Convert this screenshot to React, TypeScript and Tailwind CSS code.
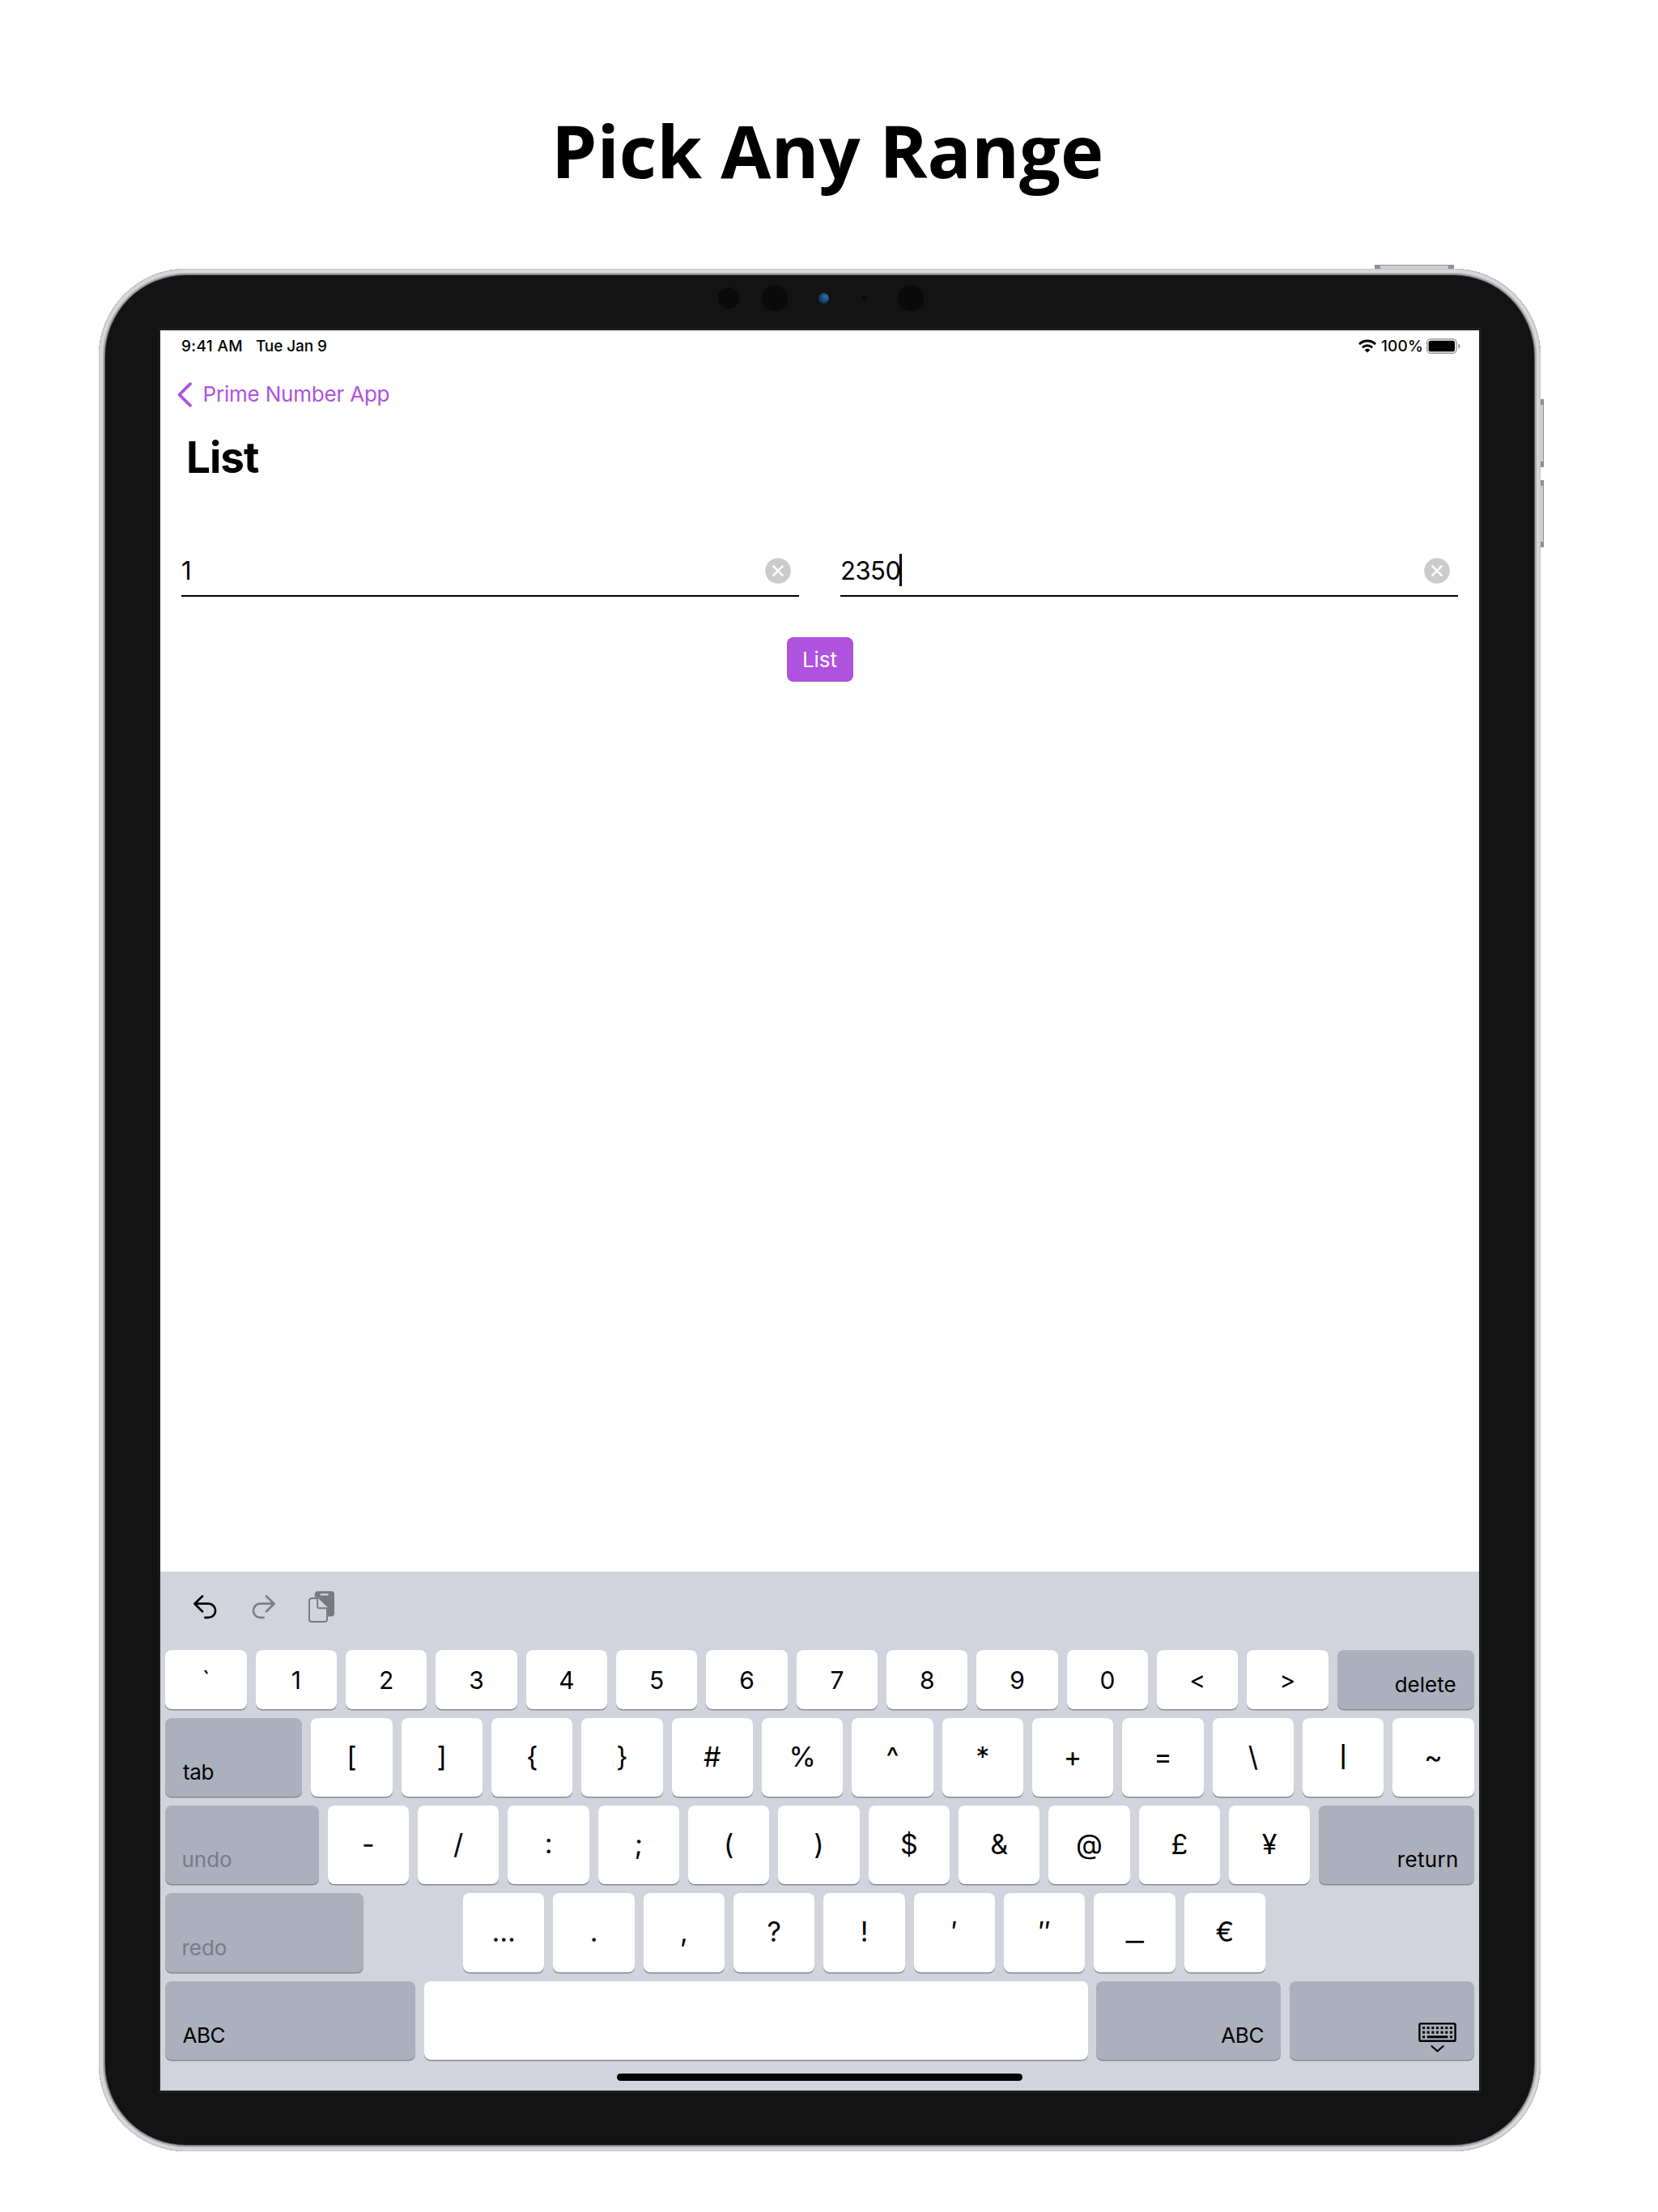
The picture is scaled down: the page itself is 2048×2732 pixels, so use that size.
import React from "react";
import clsx from "clsx";

/* ---------- icons ---------- */

function WifiIcon() {
  return (
    <svg width="22" height="17" viewBox="0 0 22 17" fill="none" stroke="#000" strokeWidth="2.9">
      <path d="M1 6.1a14.4 14.4 0 0 1 20 0" />
      <path d="M4.9 10.2a8.9 8.9 0 0 1 12.2 0" />
      <path d="M11 16.6 7.6 13.2a5 5 0 0 1 6.8 0z" fill="#000" stroke="none" />
    </svg>
  );
}

function BatteryIcon() {
  return (
    <svg width="42" height="19" viewBox="0 0 42 19">
      <rect x="0.7" y="0.7" width="36.3" height="17.6" rx="4.6" fill="none" stroke="#9a9a9a" strokeWidth="1.4" />
      <rect x="2.6" y="2.7" width="32.4" height="13.6" rx="2.6" fill="#000" />
      <path d="M39.2 6.4c1.6.5 2.4 1.7 2.4 3.1s-.8 2.6-2.4 3.1z" fill="#9a9a9a" />
    </svg>
  );
}

function BackIcon() {
  return (
    <svg width="22" height="34" viewBox="0 0 22 34" fill="none" stroke="#af52de" strokeWidth="3.8" strokeLinecap="round" strokeLinejoin="round">
      <path d="M17 4.2 3.5 17.5 17 30.8" />
    </svg>
  );
}

function ClearIcon() {
  return (
    <svg width="32" height="32" viewBox="0 0 32 32">
      <circle cx="16" cy="16" r="15.8" fill="#cbcbcb" />
      <path d="m10.4 10.4 11.2 11.2M21.6 10.4 10.4 21.6" stroke="#fff" strokeWidth="2.6" strokeLinecap="round" />
    </svg>
  );
}

function UndoIcon({ flipped = false }: { flipped?: boolean }) {
  return (
    <svg
      width="32"
      height="32"
      viewBox="0 0 32 32"
      fill="none"
      strokeWidth="2.7"
      strokeLinecap="round"
      strokeLinejoin="round"
      className={flipped ? "-scale-x-100 stroke-[#7d7f84]" : "stroke-black"}
    >
      <path d="M12 2.5 2.4 11.7 12 21.2M2.8 11.7H19.5a8.6 8.6 0 0 1 0 17.2H15.4" />
    </svg>
  );
}

function PasteIcon() {
  return (
    <svg width="35" height="42" viewBox="0 0 35 42">
      <rect x="8.8" y="1.2" width="24.2" height="31.4" rx="4" fill="#77797e" />
      <rect x="15.6" y="4.2" width="10" height="2.4" rx="0.6" fill="#d1d4dc" />
      <path d="M1 12.4a3.6 3.6 0 0 1 3.6-3.6H11.8L25 21.6V36.6a3.6 3.6 0 0 1-3.6 3.6H4.6A3.6 3.6 0 0 1 1 36.6z" fill="#d1d4dc" />
      <path
        d="M12.2 10H5A3 3 0 0 0 2 13V36a3 3 0 0 0 3 3H21a3 3 0 0 0 3-3V22.2H14.2a2 2 0 0 1-2-2V10"
        fill="none"
        stroke="#77797e"
        strokeWidth="1.9"
        strokeLinejoin="round"
      />
    </svg>
  );
}

function HideKeyboardIcon() {
  const cols = [0, 1, 2, 3, 4, 5, 6];
  return (
    <svg width="47" height="37" viewBox="0 0 47 37">
      <rect x="1.4" y="1.4" width="44.2" height="21.4" rx="1.6" fill="none" stroke="#000" strokeWidth="2.4" />
      {[5, 10.6].map((y) => cols.map((c) => <rect key={`${y}-${c}`} x={5 + c * 5.65} y={y} width="3.1" height="3.1" />))}
      <rect x="5" y="16.2" width="3.1" height="3.1" />
      <rect x="10.7" y="16.2" width="25.7" height="3.1" />
      <rect x="38.9" y="16.2" width="3.1" height="3.1" />
      <path d="m16.6 29.2 7 6.2 7-6.2" fill="none" stroke="#000" strokeWidth="2.1" strokeLinecap="round" strokeLinejoin="round" />
    </svg>
  );
}

/* ---------- keyboard ---------- */

const keyBase = "flex rounded-[8px] shadow-[0_1.5px_0_#898a8e]";

// Optical adjustments for glyphs that sit off the usual size or baseline.
const glyphTweaks: Record<string, string> = {
  "|": "text-[26px] font-semibold",
  _: "scale-x-[1.45] -translate-y-[1px]",
  ":": "-translate-y-[1px]",
};

function CharKey({ char, short = false }: { char: string; short?: boolean }) {
  return (
    <div
      className={clsx(
        keyBase,
        "w-[100.4px] shrink-0 justify-center bg-white",
        short ? "h-[73px] text-[30px] leading-[75px]" : "h-[97.2px] text-[34px] leading-[96px]",
      )}
    >
      <span className={glyphTweaks[char]}>{char}</span>
    </div>
  );
}

function ActionKey({ className, children }: { className: string; children: React.ReactNode }) {
  return (
    <div className={clsx(keyBase, "items-end bg-[#abb0bc] pb-[15px] text-[26px] leading-[30px]", className)}>
      <span>{children}</span>
    </div>
  );
}

function Row({ children }: { children: React.ReactNode }) {
  return <div className="flex gap-[10.95px]">{children}</div>;
}

const row1 = ["`", "1", "2", "3", "4", "5", "6", "7", "8", "9", "0", "<", ">"];
const row2 = ["[", "]", "{", "}", "#", "%", "^", "*", "+", "=", "\\", "|", "~"];
const row3 = ["-", "/", ":", ";", "(", ")", "$", "&", "@", "£", "¥"];
const row4 = ["…", ".", ",", "?", "!", "′", "″", "_", "€"];

function Keyboard() {
  return (
    <div className="mt-auto flex h-[641px] flex-col bg-[#d1d4dc]">
      <div className="mb-[9px] flex h-[88px] items-center gap-[39px] pl-10">
        <UndoIcon />
        <UndoIcon flipped />
        <PasteIcon />
      </div>
      <div className="flex flex-col gap-[11px] pr-[6.4px] pl-[6.4px]">
        <Row>
          {row1.map((c) => (
            <CharKey key={c} char={c} short />
          ))}
          <ActionKey className="h-[73px] flex-1 justify-end pr-[22px]">delete</ActionKey>
        </Row>
        <Row>
          <ActionKey className="h-[97.2px] flex-1 pl-[21.5px] tracking-[-0.3px]">tab</ActionKey>
          {row2.map((c) => (
            <CharKey key={c} char={c} />
          ))}
        </Row>
        <Row>
          <ActionKey className="h-[97.2px] w-[189.4px] pl-5 text-[#777c87]">undo</ActionKey>
          {row3.map((c) => (
            <CharKey key={c} char={c} />
          ))}
          <ActionKey className="h-[97.2px] flex-1 justify-end pr-[19px] tracking-[0.3px]">return</ActionKey>
        </Row>
        <Row>
          <ActionKey className="mr-[111.7px] h-[97.2px] w-[245px] pl-5 text-[#777c87]">redo</ActionKey>
          {row4.map((c) => (
            <CharKey key={c} char={c} />
          ))}
        </Row>
        <Row>
          <ActionKey className="h-[97.2px] w-[309px] pl-[21px] tracking-[-0.4px]">ABC</ActionKey>
          <div className={clsx(keyBase, "h-[97.2px] flex-1 bg-white")} />
          <ActionKey className="h-[97.2px] w-[227.6px] justify-end pr-[21px] tracking-[-0.4px]">ABC</ActionKey>
          <div className={clsx(keyBase, "h-[97.2px] w-[227.6px] items-end justify-end bg-[#abb0bc] pr-[22px] pb-[9px]")}>
            <HideKeyboardIcon />
          </div>
        </Row>
      </div>
      <div className="mx-auto mt-auto mb-3 h-[9px] w-[501px] rounded-full bg-black" />
    </div>
  );
}

/* ---------- app screen ---------- */

function Field({ value, focused = false }: { value: string; focused?: boolean }) {
  return (
    <div className="h-[53px] w-[763px] border-b-2 border-black pr-[10.5px]">
      <div className="flex h-10 items-center">
        <span className="pt-[2px] text-[31px] leading-10 tracking-[-0.5px]">{value}</span>
        {focused && <span className="-ml-px h-10 w-[3px] bg-black" />}
        <span className="mt-[2px] ml-auto">
          <ClearIcon />
        </span>
      </div>
    </div>
  );
}

function Screen() {
  return (
    <div className="flex h-[2174px] w-[1629px] flex-col bg-white font-['Inter',sans-serif] text-black shadow-[0_0_0_3px_#1b1e20]">
      <div className="flex h-[34px] items-center pt-[5px] pr-[23px] pl-[26px] text-[19px] leading-7 font-medium">
        <span className="pt-px tracking-[0.35px]">9:41 AM</span>
        <span className="ml-[16px] pt-px tracking-[-0.1px]">Tue Jan 9</span>
        <span className="ml-auto">
          <WifiIcon />
        </span>
        <span className="mr-1 ml-[6px] pt-px tracking-[0.2px]">100%</span>
        <BatteryIcon />
      </div>

      <div className="mt-[25px] flex h-10 items-center pl-5 text-[#af52de]">
        <BackIcon />
        <span className="ml-[10.5px] text-[26px] leading-10 tracking-[-0.2px]">Prime Number App</span>
      </div>

      <h2 className="mt-[26px] pl-8 text-[53px] leading-[64px] font-bold tracking-[-1px]">List</h2>

      <div className="mt-[87px] flex gap-[51px] pl-[26px]">
        <Field value="1" />
        <Field value="2350" focused />
      </div>

      <button className="mx-auto mt-[50px] h-[55px] w-[82px] rounded-[8px] bg-[#af52de] text-[26px] leading-[55px] text-white">List</button>

      <Keyboard />
    </div>
  );
}

/* ---------- device ---------- */

function Sensor({ className }: { className: string }) {
  return <div className={clsx("absolute rounded-full bg-[#0a0a0a]", className)} />;
}

function HardwareButton({ className }: { className: string }) {
  return <div className={clsx("absolute border border-[#8f9093] bg-[#cfcfd1]", className)} />;
}

export default function App() {
  return (
    <div className="flex h-[2732px] w-[2048px] flex-col overflow-hidden bg-white">
      <h1 className="mt-[135px] pr-[4px] text-center font-['Open_Sans',sans-serif] text-[90px] leading-[100px] font-bold text-black">Pick Any Range</h1>

      <div className="relative mt-[97px] ml-[122px] h-[2325px] w-[1781px]">
        <HardwareButton className="-top-[5px] left-[1576px] h-[8px] w-[98px] border-x-[7px]" />
        <HardwareButton className="top-[161px] -right-[4px] h-[84px] w-[7px] border-y-[7px]" />
        <HardwareButton className="top-[261px] -right-[4px] h-[83px] w-[7px] border-y-[7px]" />

        <div className="relative h-full w-full rounded-[108px] bg-[#131313] pt-[76px] pl-[76px] shadow-[inset_0_0_0_1px_#c4c5c6,inset_0_0_0_5px_#d6d7d9,inset_0_0_0_7px_#a9aaaf,inset_0_0_0_8px_#5f6064]">
          <Sensor className="top-[23px] left-[765px] h-[26px] w-[26px]" />
          <Sensor className="top-[20px] left-[819px] h-8 w-8" />
          <div className="absolute top-[30px] left-[889px] h-[13px] w-[13px] rounded-full bg-[radial-gradient(circle_at_70%_35%,#2f6db0,#183f70_55%,#0c1f3c)]" />
          <Sensor className="top-[33px] left-[943px] h-[6px] w-[6px]" />
          <Sensor className="top-[20px] left-[987px] h-8 w-8" />
          <Screen />
        </div>
      </div>
    </div>
  );
}
